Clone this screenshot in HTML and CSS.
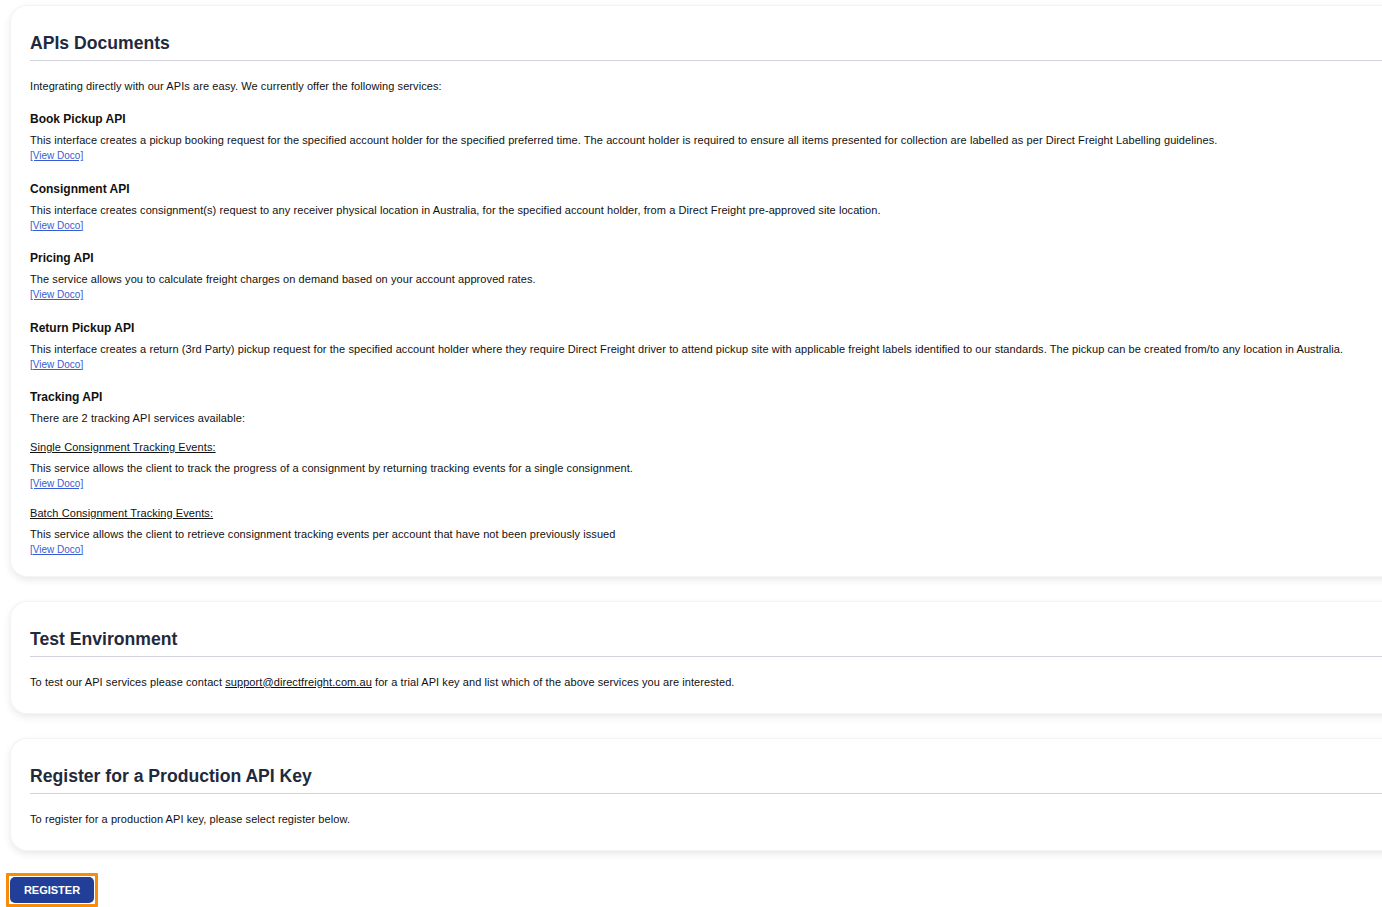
FILE: index.html
```html
<!DOCTYPE html>
<html lang="en">
<head>
  <meta charset="UTF-8" />
  <meta name="viewport" content="width=device-width, initial-scale=1.0" />
  <title>APIs Documents</title>
  <link rel="stylesheet" href="styles.css">
</head>
<body>
  <div class="page">

    <div class="card">
      <h2 class="card-title">APIs Documents</h2>
      <p class="intro">Integrating directly with our APIs are easy. We currently offer the following services:</p>

      <div class="api-block">
        <h4>Book Pickup API</h4>
        <p>This interface creates a pickup booking request for the specified account holder for the specified preferred time. The account holder is required to ensure all items presented for collection are labelled as per Direct Freight Labelling guidelines.</p>
        <a class="doco" href="#">[View Doco]</a>
      </div>

      <div class="api-block">
        <h4>Consignment API</h4>
        <p>This interface creates consignment(s) request to any receiver physical location in Australia, for the specified account holder, from a Direct Freight pre-approved site location.</p>
        <a class="doco" href="#">[View Doco]</a>
      </div>

      <div class="api-block">
        <h4>Pricing API</h4>
        <p>The service allows you to calculate freight charges on demand based on your account approved rates.</p>
        <a class="doco" href="#">[View Doco]</a>
      </div>

      <div class="api-block">
        <h4>Return Pickup API</h4>
        <p>This interface creates a return (3rd Party) pickup request for the specified account holder where they require Direct Freight driver to attend pickup site with applicable freight labels identified to our standards. The pickup can be created from/to any location in Australia.</p>
        <a class="doco" href="#">[View Doco]</a>
      </div>

      <div class="api-block last">
        <h4>Tracking API</h4>
        <p>There are 2 tracking API services available:</p>

        <div class="sub-service">
          <span class="sub-title">Single Consignment Tracking Events:</span>
          <p>This service allows the client to track the progress of a consignment by returning tracking events for a single consignment.</p>
          <a class="doco" href="#">[View Doco]</a>
        </div>

        <div class="sub-service">
          <span class="sub-title">Batch Consignment Tracking Events:</span>
          <p>This service allows the client to retrieve consignment tracking events per account that have not been previously issued</p>
          <a class="doco" href="#">[View Doco]</a>
        </div>
      </div>
    </div>

    <div class="card">
      <h2 class="card-title">Test Environment</h2>
      <p class="intro">To test our API services please contact <a class="mail" href="#">support@directfreight.com.au</a> for a trial API key and list which of the above services you are interested.</p>
    </div>

    <div class="card">
      <h2 class="card-title">Register for a Production API Key</h2>
      <p class="intro">To register for a production API key, please select register below.</p>
    </div>

    <span class="btn-focus"><button class="register-btn">REGISTER</button></span>
  </div>
</body>
</html>
```

FILE: styles.css
```css
body {
  margin: 0;
  background: #fff;
  font-family: "Liberation Sans", Arial, sans-serif;
  color: #111;
  overflow-x: hidden;
}
.page {
  padding: 6px 0 0 11px;
}
.card {
  background: #fff;
  border-radius: 16px;
  margin-right: -40px;
  margin-bottom: 26px;
  padding: 26px 19px 23px 19px;
  box-shadow: 0 0 0 1px #f4f4f4, 0 3px 9px rgba(0, 0, 0, 0.11);
}
.card-title {
  margin: 0;
  font-size: 17.6px;
  line-height: 22px;
  font-weight: bold;
  color: #1f2a3d;
  padding-bottom: 6px;
  border-bottom: 1px solid #d3d3dd;
}
.intro {
  margin: 17px 0 0;
  font-size: 11px;
  line-height: 16px;
  letter-spacing: 0.08px;
}
.mail {
  color: #111;
  text-decoration: underline;
}
.api-block {
  margin-top: 17px;
}
.api-block + .api-block {
  margin-top: 16.5px;
}
.api-block h4 {
  margin: 0 0 5px;
  font-size: 12px;
  line-height: 16px;
  font-weight: bold;
}
.api-block p {
  margin: 0;
  font-size: 11px;
  line-height: 16px;
  letter-spacing: 0.08px;
}
.doco {
  display: block;
  font-size: 10px;
  line-height: 16px;
  color: #3a5bd0;
  text-decoration: underline;
}
.last {
  margin-bottom: -5px;
}
.sub-service {
  margin-top: 13px;
}
.sub-service + .sub-service {
  margin-top: 12.5px;
}
.sub-title {
  display: block;
  font-size: 11px;
  line-height: 16px;
  letter-spacing: 0.08px;
  text-decoration: underline;
  margin-bottom: 5px;
}
.btn-focus {
  display: inline-block;
  margin: -3px 0 0 -5px;
  padding: 1px;
  border: 3px solid #f58c0a;
  border-radius: 1px;
  line-height: 0;
}
.register-btn {
  width: 84px;
  height: 26px;
  background: #213f98;
  color: #fff;
  border: none;
  border-radius: 5px;
  font-family: "Liberation Sans", Arial, sans-serif;
  font-size: 11px;
  font-weight: bold;
  cursor: pointer;
}
```
